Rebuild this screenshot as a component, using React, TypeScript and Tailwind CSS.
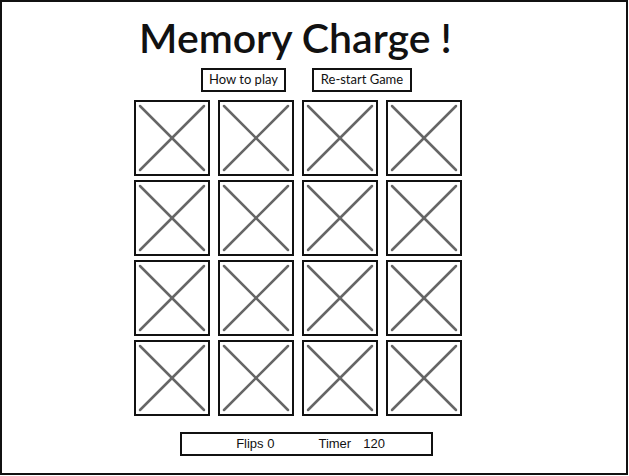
import React from "react";

const Card: React.FC = () => (
  <div className="w-[76px] h-[76px] border-2 border-[#111] bg-white p-[2px]">
    <svg viewBox="0 0 68 68" className="w-full h-full">
      <line x1="2" y1="2" x2="66" y2="66" stroke="#666" strokeWidth="2.5" strokeLinecap="round" />
      <line x1="66" y1="2" x2="2" y2="66" stroke="#666" strokeWidth="2.5" strokeLinecap="round" />
    </svg>
  </div>
);

export default function App() {
  const cards = Array.from({ length: 16 });

  return (
    <div className="w-[629px] h-[476px] bg-white font-['Liberation_Sans',Arial,sans-serif] text-[#111]">
      <div className="w-[628px] h-[475px] border-2 border-[#111]">
        <div className="w-[592px] flex flex-col items-center">
          {/* Title */}
          <h1 className="mt-[12px] mr-[5px] text-[41px] leading-[48px] font-['Lato',sans-serif] font-semibold">
            Memory Charge !
          </h1>

          {/* Buttons */}
          <div className="mt-[6px] ml-[17px] flex gap-[26px] text-[13px] font-['Lato',sans-serif]">
            <button className="h-[24px] w-[85px] border-2 border-[#111] bg-white">How to play</button>
            <button className="h-[24px] w-[100px] border-2 border-[#111] bg-white">Re-start Game</button>
          </div>

          {/* Card grid */}
          <div className="mt-[8px] grid grid-cols-4 gap-x-[8px] gap-y-[4px]">
            {cards.map((_, i) => (
              <Card key={i} />
            ))}
          </div>

          {/* Stats bar */}
          <div className="mt-[16px] ml-[17px] w-[253px] h-[24px] border-2 border-[#111] flex items-center justify-center pl-[8px] text-[13px]">
            <span>Flips 0</span>
            <span className="ml-[44px]">Timer</span>
            <span className="ml-[12px]">120</span>
          </div>
        </div>
      </div>
    </div>
  );
}
